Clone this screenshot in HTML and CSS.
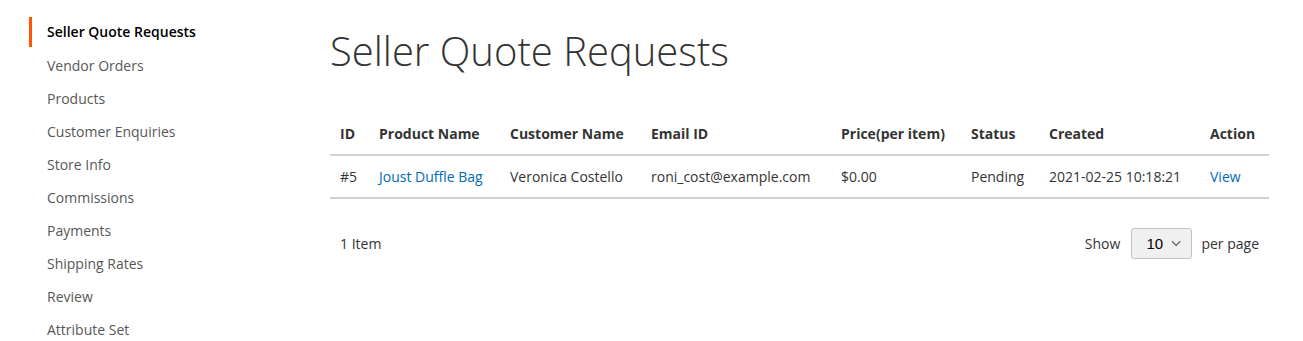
FILE: index.html
```html
<!DOCTYPE html>
<html lang="en">
<head>
    <meta charset="UTF-8">
    <meta name="viewport" content="width=device-width, initial-scale=1.0">
    <title>Seller Quote Requests</title>
    <link rel="stylesheet" href="styles.css">
</head>
<body>
    <div class="page">
        <div class="sidebar">
            <ul class="nav">
                <li class="nav-item current"><strong>Seller Quote Requests</strong></li>
                <li class="nav-item"><a href="#">Vendor Orders</a></li>
                <li class="nav-item"><a href="#">Products</a></li>
                <li class="nav-item"><a href="#">Customer Enquiries</a></li>
                <li class="nav-item"><a href="#">Store Info</a></li>
                <li class="nav-item"><a href="#">Commissions</a></li>
                <li class="nav-item"><a href="#">Payments</a></li>
                <li class="nav-item"><a href="#">Shipping Rates</a></li>
                <li class="nav-item"><a href="#">Review</a></li>
                <li class="nav-item"><a href="#">Attribute Set</a></li>
            </ul>
        </div>
        <div class="main">
            <h1 class="page-title">Seller Quote Requests</h1>
            <table class="quotes">
                <thead>
                    <tr>
                        <th class="col-id">ID</th>
                        <th class="col-product">Product Name</th>
                        <th class="col-customer">Customer Name</th>
                        <th class="col-email">Email ID</th>
                        <th class="col-price">Price(per item)</th>
                        <th class="col-status">Status</th>
                        <th class="col-created">Created</th>
                        <th class="col-action">Action</th>
                    </tr>
                </thead>
                <tbody>
                    <tr>
                        <td>#5</td>
                        <td><a href="#">Joust Duffle Bag</a></td>
                        <td>Veronica Costello</td>
                        <td>roni_cost@example.com</td>
                        <td>$0.00</td>
                        <td>Pending</td>
                        <td>2021-02-25 10:18:21</td>
                        <td><a href="#">View</a></td>
                    </tr>
                </tbody>
            </table>
            <div class="toolbar">
                <span class="amount">1 Item</span>
                <div class="limiter">
                    <span class="limiter-label">Show</span>
                    <span class="limiter-select">
                        10
                        <svg width="11" height="7" viewBox="0 0 11 7"><path d="M1 1l4.5 4.5L10 1" fill="none" stroke="#555" stroke-width="1.2"/></svg>
                    </span>
                    <span class="limiter-text">per page</span>
                </div>
            </div>
        </div>
    </div>
</body>
</html>
```

FILE: styles.css
```css
body {
    margin: 0;
    font-family: "Open Sans", "Liberation Sans", sans-serif;
    font-size: 14px;
    line-height: 20px;
    color: #333;
    background: #fff;
}

a {
    color: #006bb4;
    text-decoration: none;
}

.page {
    display: flex;
    padding: 17px 34px 0 29px;
}

.sidebar {
    width: 301px;
    flex-shrink: 0;
}

.nav {
    list-style: none;
    margin: 0;
    padding: 0;
}

.nav-item {
    margin-bottom: 3px;
}

.nav-item.current {
    margin-bottom: 4px;
}

.nav-item a,
.nav-item strong {
    display: block;
    padding: 5px 18px 5px 15px;
    border-left: 3px solid transparent;
}

.nav-item a {
    color: #575757;
}

.nav-item.current strong {
    border-left-color: #ff5501;
    color: #000;
    font-weight: 600;
}

.main {
    flex: 1;
}

.page-title {
    margin: 12px 0 40px;
    font-size: 40px;
    font-weight: 300;
    line-height: 44px;
    color: #333;
}

.quotes {
    width: 100%;
    border-collapse: collapse;
    table-layout: fixed;
}

.quotes th,
.quotes td {
    padding: 11px 10px 10px;
    text-align: left;
    white-space: nowrap;
    border-bottom: 2px solid #d1d1d1;
}

.quotes th {
    font-weight: 700;
}

.col-id { width: 19px; }
.col-product { width: 111px; }
.col-customer { width: 121px; }
.col-email { width: 170px; }
.col-price { width: 110px; }
.col-status { width: 58px; }
.col-created { width: 141px; }
.col-action { width: 49px; }

.toolbar {
    display: flex;
    justify-content: space-between;
    align-items: center;
    padding: 29px 10px 0;
}

.limiter {
    display: flex;
    align-items: center;
}

.limiter-label {
    margin-right: 11px;
}

.limiter-text {
    margin-left: 9px;
}

.limiter-select {
    display: flex;
    align-items: center;
    gap: 8px;
    box-sizing: border-box;
    width: 61px;
    height: 31px;
    padding: 0 10px 0 14px;
    border: 1px solid #c2c2c2;
    border-radius: 3px;
    background: #f0f0f0;
    color: #000;
    font-family: "Liberation Sans", sans-serif;
    font-size: 15px;
}
```
